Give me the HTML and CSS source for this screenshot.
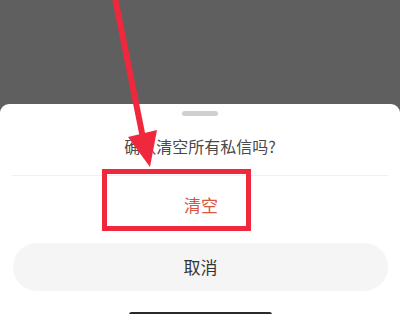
FILE: index.html
```
<!doctype html>
<html lang="zh-CN">
<head>
	<meta charset="UTF-8">
	<title>清空私信</title>
	<link rel="stylesheet" href="styles.css">
</head>
<body>
<div class="page">
	<div class="mask"></div>
	<div class="sheet">
		<div class="handle"></div>
		<div class="title">确认清空所有私信吗?</div>
		<div class="line"></div>
		<div class="clear">清空</div>
		<div class="cancel">取消</div>
		<div class="home"></div>
	</div>

	<svg class="mark" width="400" height="314" viewBox="0 0 400 314">
		<rect x="104.5" y="171.5" width="144" height="57" fill="none" stroke="#f0283e" stroke-width="5"/>
		<line x1="115" y1="-2" x2="143" y2="138" stroke="#f0283e" stroke-width="6"/>
		<polygon points="128,137 157,130 150,167" fill="#f0283e"/>
	</svg>
</div>
</body>
</html>
```

FILE: styles.css
```
html,body{margin:0;padding:0;}
body{
	font-family:"Noto Sans CJK SC","Noto Sans",sans-serif;
	background:#5f5f5f;
}
.page{
	width:400px;
	height:314px;
	position:relative;
	overflow:hidden;
	display:flex;
	flex-direction:column;
}
.mask{
	height:104px;
	flex:none;
	background:#5f5f5f;
}
.sheet{
	flex:1;
	background:#fff;
	border-radius:9px 9px 0 0;
	display:flex;
	flex-direction:column;
	align-items:center;
	padding-top:7px;
}
.handle{
	width:36px;
	height:5px;
	border-radius:3px;
	background:#cfcfcf;
}
.title{
	margin-top:18px;
	height:24px;
	line-height:24px;
	font-size:16px;
	color:#4a4a4a;
	padding-bottom:17px;
}
.line{
	align-self:stretch;
	margin:0 12px;
	height:1px;
	background:#f0f0f0;
}
.clear{
	height:58px;
	line-height:58px;
	font-size:17px;
	color:#d9553c;
	padding-left:2px;
}
.cancel{
	margin-top:9px;
	align-self:stretch;
	margin-left:13px;
	margin-right:12px;
	height:48px;
	line-height:48px;
	border-radius:24px;
	background:#f5f5f5;
	text-align:center;
	font-size:17px;
	color:#333;
}
.home{
	margin-top:21px;
	width:143px;
	height:5px;
	border-radius:3px;
	background:#2a2a2a;
}
.mark{
	position:absolute;
	left:0;
	top:0;
}
```
